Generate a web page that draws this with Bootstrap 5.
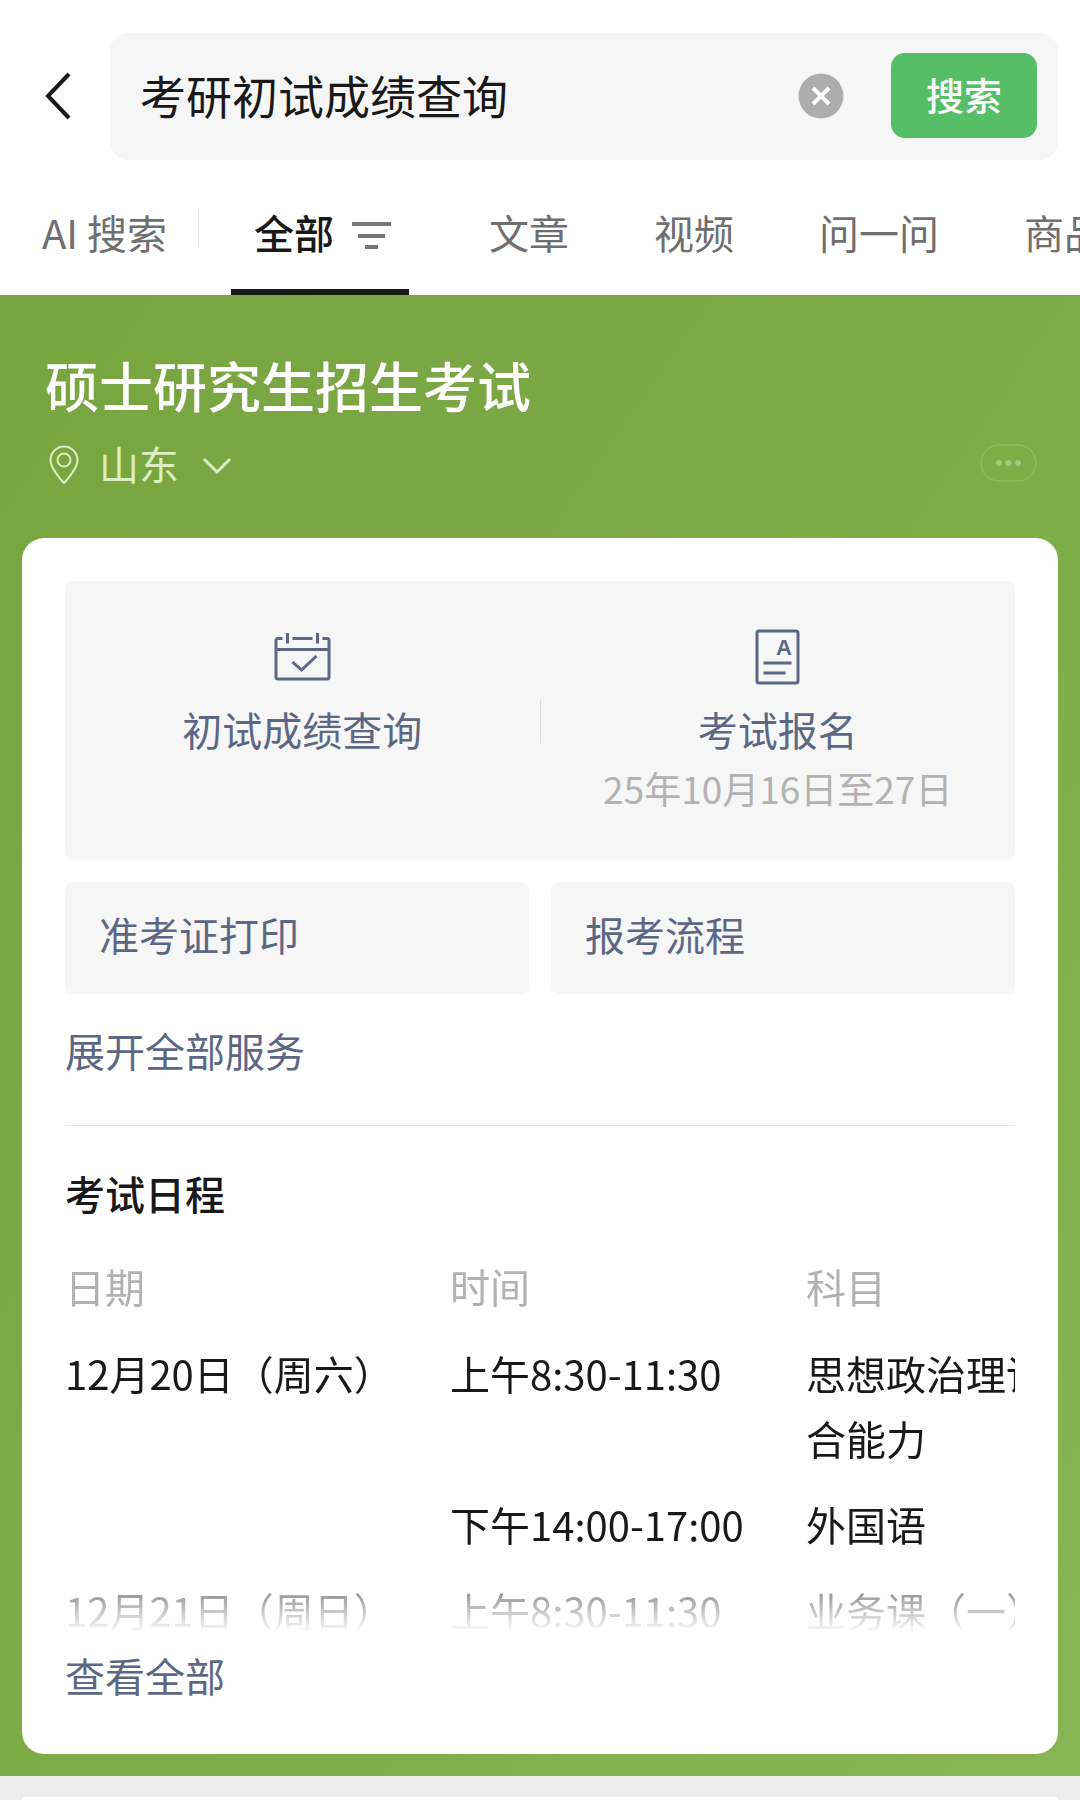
<!DOCTYPE html>
<html lang="zh-CN">
<head>
<meta charset="utf-8">
<meta name="viewport" content="width=device-width, initial-scale=1">
<title>考研初试成绩查询</title>
<link href="https://cdn.jsdelivr.net/npm/bootstrap@5.3.0/dist/css/bootstrap.min.css" rel="stylesheet">
<style>
  :root { --ink: #191919; --muted-ink: #6f6f6f; --pale-ink: #b2b2b2; --link-ink: #5d6784; --panel: #f6f6f6; }
  body { font-family: "Noto Sans CJK SC", sans-serif; font-size: 40px; line-height: 60px; color: var(--ink); background: #ededed; }
  a { text-decoration: none; color: var(--link-ink); }
  svg { display: block; flex: none; }
  .page { overflow-x: hidden; }

  .search-row { padding: 33px 22px 0 0; }
  .back-btn { width: 110px; margin-bottom: 2px; }
  .search-box { background: var(--panel); border-radius: 18px; padding: 20px 21px 22px 30px; height: 127px; }
  .search-box input { min-width: 0; font-size: 46px; line-height: 68px; color: var(--ink); height: 72px; margin-bottom: 4px; }
  .search-box input:focus { outline: 0; }
  .search-btn { width: 146px; height: 85px; margin-left: 47px; padding: 0 0 4px; border-radius: 14px; background: #56be66; color: #fff; font-size: 38px; font-weight: 500; }
  .search-btn:hover { background: #4cb35c; color: #fff; }

  .tab-link { padding: 42px 0 33px; white-space: nowrap; color: var(--muted-ink); }
  .tab-link.active { padding: 42px 18px 27px 23px; gap: 18px; border-bottom: 6px solid #161a10; color: var(--ink); font-weight: 500; }
  .tab-bar { padding-left: 42px; }
  .tab-rule { width: 1px; height: 40px; margin: 0 32px 0 31px; background: #e6e6e6; }
  .tab-first { margin-left: 80px; }
  .tab-next { margin-left: 85px; }

  .hero { padding: 60px 22px 22px; background: linear-gradient(125deg, #78a53f 0%, #7ba845 30%, #7fae48 60%, #89b556 100%); }
  .hero-head { padding: 0 21px 0 23px; }
  .hero h1 { font-size: 54px; line-height: 60px; font-weight: 500; color: #fff; }
  .place-row { margin-top: 18px; margin-bottom: 45px; }
  .place-btn { font-size: 40px; line-height: 60px; color: #dcefc2; }
  .place-btn:hover { color: #fff; }
  .result-card { background: #fff; border-radius: 22px; padding: 43px 43px 49px; }

  .panel-box { background: var(--panel); border-radius: 8px; }
  .service-link { padding: 46px 0 43px; }
  .service-link svg { margin-bottom: 12px; }
  .service-date { font-size: 37px; line-height: 58px; color: var(--pale-ink); }
  .service-rule { width: 1px; height: 44px; background: #dedede; }
  .short-links { gap: 22px; margin-top: 22px; }
  .short-links a { padding: 22px 34px 30px; }
  .expand-link { margin-top: 26px; }
  .section-rule { height: 1px; margin: 45px 0 37px; background: #e5e5e5; }
  .section-title { font-size: 40px; line-height: 60px; font-weight: 500; }

  .schedule { height: 380px; margin: 30px 0 12px; overflow: hidden; -webkit-mask-image: linear-gradient(to top, transparent, #000 88px); mask-image: linear-gradient(to top, transparent, #000 88px); }
  .schedule table { width: 1230px; table-layout: fixed; line-height: 65px; white-space: nowrap; }
  .schedule th { padding: 1px 0 12px; font-weight: 400; color: var(--pale-ink); }
  .schedule td { padding: 10px 0 11px; vertical-align: top; }
  .col-date { width: 385px; }
  .col-time { width: 356px; }

  .next-card { margin: 21px 22px 0; border-radius: 22px 22px 0 0; background: #fff; }
</style>
</head>
<body>
<div class="page min-vh-100 d-flex flex-column">
  <header class="bg-white">
    <form class="search-row d-flex align-items-center" onsubmit="return false">
      <button type="button" class="back-btn btn border-0 p-0 d-flex" aria-label="返回">
        <svg width="110" height="50" viewBox="-44 0 110 50" fill="none" stroke="#191919" stroke-width="4"><path d="M25 3 4 25l21 22"/></svg>
      </button>
      <div class="search-box d-flex align-items-center flex-grow-1">
        <input class="flex-grow-1 border-0 bg-transparent p-0" type="text" value="考研初试成绩查询" aria-label="搜索内容">
        <button type="button" class="btn border-0 p-0" aria-label="清除">
          <svg width="46" height="46" viewBox="0 0 46 46"><circle cx="23" cy="23" r="22.5" fill="#adadad"/><path d="m15 15 16 16M31 15 15 31" stroke="#fff" stroke-width="4" fill="none"/></svg>
        </button>
        <button type="submit" class="search-btn btn border-0">搜索</button>
      </div>
    </form>
    <nav class="tab-bar d-flex align-items-center overflow-hidden">
      <a class="tab-link" href="#">AI 搜索</a>
      <span class="tab-rule flex-shrink-0"></span>
      <a class="tab-link active d-flex align-items-center" href="#">全部
        <svg width="39" height="36" viewBox="0 0 39 36" fill="#777"><path d="M0 8h39v4H0zM6 20h27v4H6zM13 31h13v4H13z"/></svg>
      </a>
      <a class="tab-link tab-first" href="#">文章</a>
      <a class="tab-link tab-next" href="#">视频</a>
      <a class="tab-link tab-next" href="#">问一问</a>
      <a class="tab-link tab-next" href="#">商品</a>
    </nav>
  </header>

  <main class="hero">
    <div class="hero-head">
      <h1 class="m-0">硕士研究生招生考试</h1>
      <div class="place-row d-flex align-items-center justify-content-between">
        <button type="button" class="place-btn btn border-0 p-0 d-flex align-items-center">
          <svg width="54" height="42" viewBox="-4 -1 54 42" fill="none" stroke="currentColor" stroke-width="2"><path d="M15 40C12 37 1.500 25 1.500 17a13.500 13.500 0 0 1 27 0C28.500 25 18 37 15 40z"/><circle cx="15" cy="17" r="6.500"/></svg>
          <span>山东</span>
          <svg class="ms-4" width="28" height="24" viewBox="3 0 28 24" fill="none" stroke="currentColor" stroke-width="3"><path d="m4 8 13 13L30 8"/></svg>
        </button>
        <button type="button" class="btn border-0 p-0" aria-label="更多">
          <svg width="57" height="38" viewBox="0 0 57 38"><rect x="1" y="1" width="55" height="36" rx="18" fill="none" stroke="#9cc26c" stroke-width="1"/><g fill="#a4c878"><circle cx="19" cy="19" r="3"/><circle cx="28.500" cy="19" r="3"/><circle cx="38" cy="19" r="3"/></g></svg>
        </button>
      </div>
    </div>

    <section class="result-card">
      <div class="panel-box d-flex align-items-center">
        <a class="service-link d-flex flex-column align-items-center align-self-stretch flex-fill w-50" href="#">
          <svg width="60" height="60" viewBox="0 0 60 60" fill="none" stroke="currentColor" stroke-width="3"><path d="M10.500 11.500H6a2 2 0 0 0-2 2V50a2 2 0 0 0 2 2h49a2 2 0 0 0 2-2V13.500a2 2 0 0 0-2-2h-4.500M20.500 11.500h20M4 22.500h53M15.500 6v10.500M45.500 6v10.500M20.500 35l9 8 15-14"/></svg>
          <span>初试成绩查询</span>
        </a>
        <span class="service-rule"></span>
        <a class="service-link d-flex flex-column align-items-center flex-fill w-50" href="#">
          <svg width="60" height="60" viewBox="0 0 60 60" fill="none" stroke="currentColor" stroke-width="3"><rect x="9" y="4" width="41" height="52" rx="2"/><path d="M15.500 36h28M15.500 46h22"/><text x="28" y="28" font-family="Liberation Sans, sans-serif" font-size="22" font-weight="700" fill="currentColor" stroke="none">A</text></svg>
          <span>考试报名</span>
          <span class="service-date">25年10月16日至27日</span>
        </a>
      </div>
      <div class="short-links d-flex">
        <a class="panel-box flex-fill w-50" href="#">准考证打印</a>
        <a class="panel-box flex-fill w-50" href="#">报考流程</a>
      </div>
      <a class="expand-link d-block" href="#">展开全部服务</a>
      <div class="section-rule"></div>

      <h2 class="section-title m-0">考试日程</h2>
      <div class="schedule">
        <table>
          <thead>
            <tr><th class="col-date" scope="col">日期</th><th class="col-time" scope="col">时间</th><th scope="col">科目</th></tr>
          </thead>
          <tbody>
            <tr><td>12月20日（周六）</td><td>上午8:30-11:30</td><td>思想政治理论<br>合能力</td></tr>
            <tr><td></td><td>下午14:00-17:00</td><td>外国语</td></tr>
            <tr><td>12月21日（周日）</td><td>上午8:30-11:30</td><td>业务课（一）</td></tr>
          </tbody>
        </table>
      </div>
      <a class="d-block" href="#">查看全部</a>
    </section>
  </main>

  <section class="next-card flex-grow-1"></section>
</div>
<script src="https://cdn.jsdelivr.net/npm/bootstrap@5.3.0/dist/js/bootstrap.bundle.min.js"></script>
</body>
</html>
